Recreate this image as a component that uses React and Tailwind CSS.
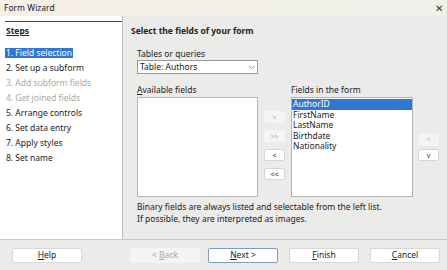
import React from "react";

const font = { fontFamily: '"Noto Sans", "Open Sans", sans-serif' };

function SmallBtn({ children, enabled }) {
  return (
    <div
      className={`w-[21px] h-[12px] flex items-center justify-center text-[7px] leading-none rounded-[2px] ${
        enabled ? "bg-white border border-[#d6d6d6] text-[#333]" : "bg-[#f4f4f4] text-[#b5b5b5]"
      }`}
    >
      {children}
    </div>
  );
}

function BottomBtn({ children, disabled, focused, className = "" }) {
  return (
    <div
      className={`h-[15px] w-[70px] flex items-center justify-center text-[8.5px] leading-none rounded-[2px] ${
        disabled
          ? "bg-[#f4f4f4] text-[#a8a8a8]"
          : focused
          ? "bg-white border border-[#7a9ec9] text-[#222]"
          : "bg-white border border-[#d8d8d8] text-[#222]"
      } ${className}`}
    >
      {children}
    </div>
  );
}

export default function App() {
  const steps = [
    { t: "1. Field selection", s: "sel" },
    { t: "2. Set up a subform" },
    { t: "3. Add subform fields", s: "dis" },
    { t: "4. Get joined fields", s: "dis" },
    { t: "5. Arrange controls" },
    { t: "6. Set data entry" },
    { t: "7. Apply styles" },
    { t: "8. Set name" },
  ];
  const fields = ["AuthorID", "FirstName", "LastName", "Birthdate", "Nationality"];
  return (
    <div className="w-[447px] h-[270px] bg-[#ebebea] flex flex-col overflow-hidden text-[#222]" style={font}>
      <div className="h-[16px] flex items-center justify-between pl-[4px] pr-[4px] bg-gradient-to-r from-[#f6efe8] via-[#f3f0e8] to-[#eef0ea] text-[8.5px]">
        <span className="text-[#1a1a1a]">Form Wizard</span>
        <span className="text-[10px] text-[#333] leading-none">✕</span>
      </div>
      <div className="flex h-[223px]">
        <div className="w-[123px] bg-white border-r border-[#bdbdbd] pl-[5px] pt-[5px]">
          <div className="border-t-[1.5px] border-[#444] pt-[3px]">
            <div className="text-[8.5px] font-bold underline leading-[12px] pl-[1px]">Steps</div>
            <div className="mt-[8px] flex flex-col">
              {steps.map((s, i) => (
                <div key={i} className="h-[15px] flex items-center">
                  <span
                    className={`text-[8.5px] leading-[10px] px-[1px] ${
                      s.s === "sel"
                        ? "bg-[#2f77d0] text-white"
                        : s.s === "dis"
                        ? "text-[#a8a8a8]"
                        : "text-[#222]"
                    }`}
                  >
                    {s.t}
                  </span>
                </div>
              ))}
            </div>
          </div>
        </div>
        <div className="flex-1 pl-[8px] pt-[9px]">
          <div className="text-[8.5px] font-bold leading-[12px]">Select the fields of your form</div>
          <div className="pl-[6px] mt-[11px]">
            <div className="text-[8.5px] leading-[11px]">Tables or queries</div>
            <div className="mt-[1px] w-[121px] h-[14px] bg-white border border-[#9a9a9a] flex items-center justify-between pl-[2px] pr-[2px]">
              <span className="text-[8.5px] leading-none">Table: Authors</span>
              <svg width="7" height="5" viewBox="0 0 7 5"><path d="M1 1l2.5 2.5L6 1" stroke="#999" fill="none" strokeWidth="1" /></svg>
            </div>
            <div className="flex mt-[10px]">
              <div className="flex flex-col">
                <div className="text-[8.5px] leading-[11px]"><span className="underline">A</span>vailable fields</div>
                <div className="mt-[2px] w-[121px] h-[100px] bg-white border border-[#b5b5b5]" />
              </div>
              <div className="w-[33px] flex flex-col items-center pt-[27px] gap-[7px]">
                <SmallBtn>&gt;</SmallBtn>
                <SmallBtn>&gt;&gt;</SmallBtn>
                <SmallBtn enabled>&lt;</SmallBtn>
                <SmallBtn enabled>&lt;&lt;</SmallBtn>
              </div>
              <div className="flex flex-col">
                <div className="text-[8.5px] leading-[11px]">Fields in the form</div>
                <div className="mt-[2px] w-[122px] h-[100px] bg-white border border-[#b5b5b5] pt-[1px]">
                  {fields.map((f, i) => (
                    <div
                      key={f}
                      className={`h-[10.5px] flex items-center text-[8.5px] leading-[10px] pl-[1px] ${
                        i === 0 ? "bg-[#2f77d0] text-white" : ""
                      }`}
                    >
                      {f}
                    </div>
                  ))}
                </div>
              </div>
              <div className="flex flex-col pl-[5px] pt-[50px] gap-[3px]">
                <SmallBtn>^</SmallBtn>
                <SmallBtn enabled>v</SmallBtn>
              </div>
            </div>
            <div className="mt-[4px] text-[8.5px] leading-[12px]">
              <div>Binary fields are always listed and selectable from the left list.</div>
              <div>If possible, they are interpreted as images.</div>
            </div>
          </div>
        </div>
      </div>
      <div className="border-t border-[#c8c8c8] flex-1 flex items-center pl-[12px] pt-[1px]">
        <BottomBtn><span><span className="underline">H</span>elp</span></BottomBtn>
        <BottomBtn disabled className="ml-[48px]"><span>&lt; <span className="underline">B</span>ack</span></BottomBtn>
        <BottomBtn focused className="ml-[8px]"><span><span className="underline">N</span>ext &gt;</span></BottomBtn>
        <BottomBtn className="ml-[11px]"><span><span className="underline">F</span>inish</span></BottomBtn>
        <BottomBtn className="ml-[11px]"><span><span className="underline">C</span>ancel</span></BottomBtn>
      </div>
    </div>
  );
}
